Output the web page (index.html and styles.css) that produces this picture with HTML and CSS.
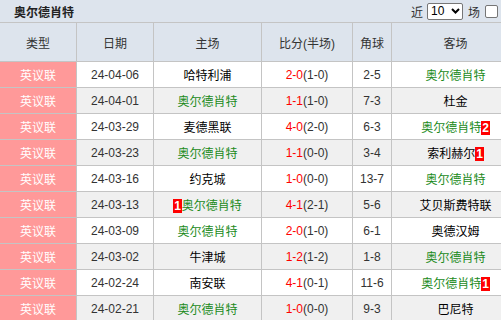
FILE: index.html
```html
<!DOCTYPE html>
<html lang="zh">
<head>
<meta charset="utf-8">
<link rel="stylesheet" href="styles.css">
</head>
<body>
<div class="panel">
  <div class="titlebar">
    <span class="title">奥尔德肖特</span>
    <div class="filter">
      <span>近</span>
      <span class="select">10<svg class="caret" width="9" height="6" viewBox="0 0 9 6"><path d="M1 1 L4.5 4.5 L8 1" fill="none" stroke="#000" stroke-width="2"/></svg></span>
      <span>场</span>
      <span class="check"></span>
      <span class="orange"></span>
    </div>
  </div>
  <table class="grid">
    <colgroup>
      <col class="c1"><col class="c2"><col class="c3"><col class="c4"><col class="c5"><col class="c6">
    </colgroup>
    <thead>
      <tr><th>类型</th><th>日期</th><th>主场</th><th>比分(半场)</th><th>角球</th><th>客场</th></tr>
    </thead>
    <tbody>
      <tr><td class="lg">英议联</td><td class="dt">24-04-06</td><td>哈特利浦</td><td><span class="r">2-0</span>(1-0)</td><td>2-5</td><td class="g">奥尔德肖特</td></tr>
      <tr class="alt"><td class="lg">英议联</td><td class="dt">24-04-01</td><td class="g">奥尔德肖特</td><td><span class="r">1-1</span>(1-0)</td><td>7-3</td><td>杜金</td></tr>
      <tr><td class="lg">英议联</td><td class="dt">24-03-29</td><td>麦德黑联</td><td><span class="r">4-0</span>(2-0)</td><td>6-3</td><td class="g">奥尔德肖特<span class="badge">2</span></td></tr>
      <tr class="alt"><td class="lg">英议联</td><td class="dt">24-03-23</td><td class="g">奥尔德肖特</td><td><span class="r">1-1</span>(0-0)</td><td>3-4</td><td>索利赫尔<span class="badge">1</span></td></tr>
      <tr><td class="lg">英议联</td><td class="dt">24-03-16</td><td>约克城</td><td><span class="r">1-0</span>(0-0)</td><td>13-7</td><td class="g">奥尔德肖特</td></tr>
      <tr class="alt"><td class="lg">英议联</td><td class="dt">24-03-13</td><td class="g"><span class="badge">1</span>奥尔德肖特</td><td><span class="r">4-1</span>(2-1)</td><td>5-6</td><td>艾贝斯费特联</td></tr>
      <tr><td class="lg">英议联</td><td class="dt">24-03-09</td><td class="g">奥尔德肖特</td><td><span class="r">2-0</span>(1-0)</td><td>6-1</td><td>奥德汉姆</td></tr>
      <tr class="alt"><td class="lg">英议联</td><td class="dt">24-03-02</td><td>牛津城</td><td><span class="r">1-2</span>(1-2)</td><td>1-8</td><td class="g">奥尔德肖特</td></tr>
      <tr><td class="lg">英议联</td><td class="dt">24-02-24</td><td>南安联</td><td><span class="r">4-1</span>(0-1)</td><td>11-6</td><td class="g">奥尔德肖特<span class="badge">1</span></td></tr>
      <tr class="alt"><td class="lg">英议联</td><td class="dt">24-02-21</td><td class="g">奥尔德肖特</td><td><span class="r">1-0</span>(0-0)</td><td>9-3</td><td>巴尼特</td></tr>
    </tbody>
  </table>
</div>
</body>
</html>
```

FILE: styles.css
```css
html, body {
  margin: 0;
  padding: 0;
  overflow: hidden;
  background: #fff;
}
body {
  font-family: "Liberation Sans", Arial, "Noto Sans CJK SC", sans-serif;
  font-size: 12px;
  color: #333;
}
.panel {
  width: 520px;
}
.titlebar {
  height: 22px;
  background: #dde4ed;
  border-bottom: 1px solid #c4c4c4;
  display: flex;
  align-items: center;
  justify-content: space-between;
  padding-left: 14px;
  box-sizing: content-box;
}
.title {
  font-weight: bold;
  font-size: 12px;
  color: #222;
}
.filter {
  display: flex;
  align-items: center;
  width: 109px;
  font-size: 12px;
  color: #333;
}
.select {
  display: inline-flex;
  align-items: center;
  justify-content: space-between;
  box-sizing: border-box;
  width: 36px;
  height: 17px;
  margin: 0 5px 0 4px;
  padding: 0 2px 0 3px;
  background: #fff;
  border: 1px solid #767676;
  border-radius: 2px;
  color: #000;
  font-size: 12px;
}
.check {
  display: inline-block;
  box-sizing: border-box;
  width: 13px;
  height: 13px;
  margin-left: 5px;
  border: 1px solid #767676;
  border-radius: 2px;
  background: #fff;
}
.orange {
  display: inline-block;
  width: 2px;
  height: 12px;
  margin-left: 3px;
  background: #f0a040;
}
.grid {
  border-collapse: separate;
  border-spacing: 0;
  table-layout: fixed;
  width: 520px;
}
.c1 { width: 77px; }
.c2 { width: 77px; }
.c3 { width: 108px; }
.c4 { width: 91px; }
.c5 { width: 39px; }
.c6 { width: 128px; }
.grid th, .grid td {
  box-sizing: border-box;
  border-right: 1px solid #c4c4c4;
  border-bottom: 1px solid #c4c4c4;
  text-align: center;
  padding: 0;
  white-space: nowrap;
}
.grid th {
  height: 39px;
  background: #dde4ed;
  font-weight: normal;
  color: #333;
}
.grid td {
  height: 26px;
  color: #000;
}
.grid tr.alt td {
  background: #f0f0f0;
}
.grid td.lg, .grid tr.alt td.lg {
  background: #ff9999;
  color: #fff;
}
.grid td.dt {
  color: #333;
}
.grid td.g {
  color: #1a8a1a;
}
.r {
  color: #f00;
}
.grid td:nth-child(4), .grid td:nth-child(5) {
  color: #333;
}
.badge {
  display: inline-block;
  background: #f00;
  color: #fff;
  font-weight: bold;
  padding: 0 1px;
  line-height: 14px;
}
```
